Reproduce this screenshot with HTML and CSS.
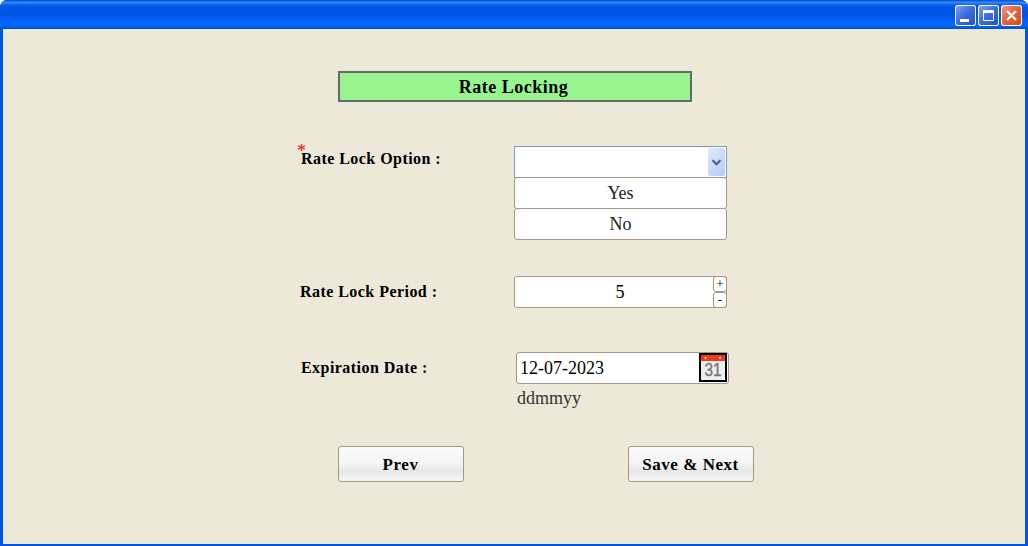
FILE: index.html
```html
<!DOCTYPE html>
<html lang="en">
<head>
<meta charset="utf-8">
<title>Rate Locking</title>
<link rel="stylesheet" href="styles.css">
</head>
<body>
<div class="window">
  <header class="titlebar">
    <button class="control" aria-label="Minimize"><svg width="21" height="21"><path d="M5 15.500h9" stroke="#fff" stroke-width="3"/></svg></button>
    <button class="control" aria-label="Maximize"><svg width="21" height="21"><path d="M5.500 6v9.500h10V6" fill="none" stroke="#fff"/><path d="M5 6.500h11" stroke="#fff" stroke-width="3"/></svg></button>
    <button class="control close" aria-label="Close"><svg width="21" height="21"><path d="M6 6l9 9M15 6l-9 9" stroke="#fff" stroke-width="2.200"/></svg></button>
  </header>
  <main class="content">
    <h1 class="heading">Rate Locking</h1>
    <form class="form">
      <div class="row option-row">
        <label class="label"><span class="required">*</span>Rate Lock Option :</label>
        <div class="dropdown">
          <div class="select"><span class="arrow"><svg width="17" height="28"><path d="M4.500 12.200l4 4 4-4" fill="none" stroke="#4d6185" stroke-width="2.200"/></svg></span></div>
          <div class="choice">Yes</div>
          <div class="choice">No</div>
        </div>
      </div>
      <div class="row period-row">
        <label class="label">Rate Lock Period :</label>
        <div class="spinner">
          <span class="value">5</span>
          <span class="steps"><span class="step">+</span><span class="step">-</span></span>
        </div>
      </div>
      <div class="row date-row">
        <label class="label">Expiration Date :</label>
        <div class="date">
          <div class="date-input"><span>12-07-2023</span>
            <svg class="calendar" width="28" height="29" viewBox="0 0 28 29"><rect width="28" height="29" fill="#000"/><rect x="2" y="2" width="24" height="25" fill="#eee"/><rect x="2" y="2" width="24" height="6" fill="#f23b16"/><circle cx="6.500" cy="5" r="1" fill="#fff"/><circle cx="21" cy="5" r="1" fill="#fff"/><path d="M26 23v4h-4z" fill="#fff"/><text x="14" y="23" class="day" textLength="17" lengthAdjust="spacingAndGlyphs">31</text></svg>
          </div>
          <div class="hint">ddmmyy</div>
        </div>
      </div>
      <div class="actions">
        <button class="button" type="button">Prev</button>
        <button class="button" type="button">Save &amp; Next</button>
      </div>
    </form>
  </main>
</div>
</body>
</html>
```
FILE: styles.css
```css
* { box-sizing: border-box; }
body { margin: 0; background: #fff; font-family: "Liberation Serif", serif; color: #000; }
.window {
  height: 546px;
  padding: 0 3px 2px;
  border-radius: 7px 7px 0 0;
  background: #0054e6;
  overflow: hidden;
}
.titlebar {
  height: 29px;
  margin: 0 -3px;
  padding: 5px 6px 0 0;
  display: flex;
  justify-content: flex-end;
  gap: 2px;
  background: linear-gradient(#0058e0 0, #0858dd 1px, #3a8df5 2px, #1670f3 4px, #0058e8 6px, #0054e3 10px, #0055e5 15px, #0060f8 20px, #0068ff 25px, #0060ee 27px, #0048cc 29px);
}
.control {
  width: 21px;
  height: 21px;
  padding: 0;
  border: 0;
  border-radius: 3px;
  overflow: hidden;
  box-shadow: inset 0 0 0 1px #fff;
  background: linear-gradient(135deg, #86a6f4, #3b6ae0 50%, #1f50d0);
}
.control svg { display: block; }
.close { background: linear-gradient(135deg, #f0a088, #e3613c 50%, #d84310); }
.content {
  height: 515px;
  padding-top: 42px;
  background: #ece9d8;
}
.heading {
  width: 354px;
  height: 31px;
  margin: 0 0 44px 335px;
  padding-right: 3px;
  border: 2px solid #696969;
  background: #98f48f;
  font-size: 18px;
  line-height: 28px;
  letter-spacing: .5px;
  text-align: center;
}
.form { padding-left: 298px; }
.row { display: flex; }
.option-row { height: 130px; }
.period-row { height: 76px; }
.date-row { height: 94px; }
.label {
  position: relative;
  width: 213px;
  font-weight: bold;
  font-size: 16px;
  line-height: 25px;
  letter-spacing: .45px;
}
.period-row .label { margin-left: -1px; width: 214px; line-height: 31px; }
.date-row .label { width: 215px; line-height: 31px; }
.required { position: absolute; left: -4px; top: -7px; color: #f00; font-size: 18px; font-weight: normal; }
.dropdown { width: 213px; }
.select {
  height: 32px;
  padding: 1px;
  border: 1px solid #7f9db9;
  background: #fff;
  display: flex;
  justify-content: flex-end;
}
.arrow {
  width: 17px;
  height: 28px;
  border-radius: 2px;
  background: linear-gradient(135deg, #dfe8fd, #b4cbf8);
}
.choice {
  height: 32px;
  margin-top: -1px;
  border: 1px solid #a39887;
  border-radius: 3px;
  background: #fff;
  color: #222;
  font-size: 18px;
  line-height: 31px;
  text-align: center;
}
.spinner {
  width: 213px;
  height: 32px;
  display: flex;
  border: 1px solid #a39887;
  border-radius: 3px;
  background: #fff;
  font-size: 18px;
}
.value { flex: 1; padding-left: 11px; line-height: 31px; text-align: center; }
.steps { width: 14px; margin: -1px; }
.step {
  display: block;
  height: 16px;
  border: 1px solid #a39887;
  border-radius: 3px;
  font-size: 13px;
  line-height: 14px;
  text-align: center;
}
.date-input {
  width: 213px;
  height: 32px;
  padding-left: 3px;
  display: flex;
  justify-content: space-between;
  border: 1px solid #a39887;
  border-radius: 3px;
  background: #fff;
  font-size: 18px;
  line-height: 31px;
}
.calendar { margin-right: 1px; }
.day { font-family: "Liberation Sans", sans-serif; font-size: 18px; text-anchor: middle; fill: #777; stroke: #777; stroke-width: .4px; }
.hint { padding: 4px 0 0 1px; font-size: 18px; line-height: 21px; color: #333; }
.actions { display: flex; gap: 164px; margin-left: 37px; }
.button {
  width: 126px;
  height: 36px;
  padding: 1px 1px 0 0;
  border: 1px solid #a39887;
  border-radius: 3px;
  background: linear-gradient(#fafafa, #f4f4f4 48%, #e7e7e7 72%, #f7f7f7);
  font: bold 17px "Liberation Serif", serif;
  letter-spacing: .55px;
  color: #000;
}
```
